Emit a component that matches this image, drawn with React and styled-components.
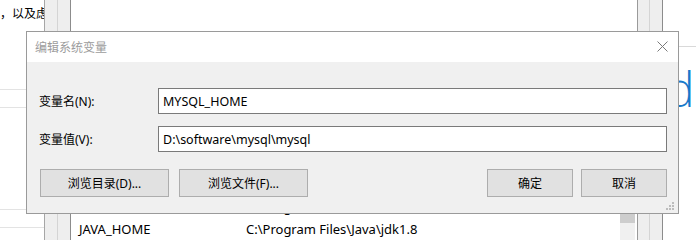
import React from 'react'
import styled, { createGlobalStyle } from 'styled-components'

// CSS
const GlobalStyle = createGlobalStyle`
    html, body {
        margin: 0;
        padding: 0;
        background: #ffffff;
    }
    body {
        font-family: "Noto Sans", "Noto Sans CJK SC", sans-serif;
        font-size: 12px;
        color: #000000;
    }
`

const Screen = styled.div`
    position: relative;
    width: 696px;
    height: 240px;
    overflow: hidden;
    display: flex;
    background: #ffffff;
`

const LeftColumn = styled.div`
    width: 44px;
    flex: none;
    display: flex;
    flex-direction: column;
    overflow: hidden;
`

const TopText = styled.div`
    height: 28px;
    line-height: 28px;
    white-space: nowrap;
`

const Rule = styled.div`
    height: 1px;
    background: #e3e3e3;
    margin-top: ${props => props.$gap}px;
    flex: none;
`

const FrameStrip = styled.div`
    flex: none;
    display: flex;
`

const FrameBand = styled.div`
    width: ${props => props.$width}px;
    background: #eeeeee;
    border-left: 1px solid ${props => props.$left};
    border-right: ${props => (props.$right ? `1px solid ${props.$right}` : 'none')};
`

const ListArea = styled.div`
    width: 549px;
    flex: none;
    display: flex;
    flex-direction: column;
    justify-content: flex-end;
`

const ListRow = styled.div`
    height: 22px;
    display: grid;
    grid-template-columns: 167px 1fr;
    align-items: center;
    font-size: 13px;
    white-space: nowrap;
    padding-left: 8px;
`

const Scrollbar = styled.div`
    width: 15px;
    flex: none;
    margin-right: 2px;
    display: flex;
    flex-direction: column;
`

const ScrollTrack = styled.div`
    background: #f0f0f0;
    flex: 1;
`

const ScrollThumb = styled.div`
    height: 33px;
    background: #cdcdcd;
`

const ScrollSpace = styled.div`
    height: 190px;
`

const RightArea = styled.div`
    flex: 1;
    overflow: hidden;
    display: flex;
    flex-direction: column;
`

const RightRule = styled.div`
    height: 1px;
    background: #d9d9d9;
    margin-top: 46px;
`

const BigHeading = styled.div`
    margin-top: 18px;
    padding-left: 3px;
    font-family: "Open Sans", sans-serif;
    font-weight: 300;
    font-size: 48px;
    line-height: 48px;
    color: #1979ca;
    white-space: nowrap;
`

const Dialog = styled.div`
    position: absolute;
    left: 26px;
    top: 31px;
    width: 653px;
    height: 183px;
    box-sizing: border-box;
    border: 1px solid #9a9a9a;
    background: #f0f0f0;
    display: flex;
    flex-direction: column;
`

const TitleBar = styled.div`
    height: 30px;
    background: #ffffff;
    display: flex;
    align-items: center;
    justify-content: space-between;
    padding: 0 10px 0 8px;
`

const TitleText = styled.span`
    color: #9c9c9c;
    font-size: 12px;
`

const CloseIcon = styled.svg`
    width: 11px;
    height: 11px;
    margin-top: -2px;
`

const DialogBody = styled.div`
    flex: 1;
    padding: 26px 11px 0 12px;
    display: flex;
    flex-direction: column;
`

const FieldGrid = styled.div`
    display: grid;
    grid-template-columns: 119px 1fr;
    row-gap: 12px;
    align-items: center;
`

const FieldLabel = styled.label`
    font-size: 12px;
`

const FieldInput = styled.div`
    height: 26px;
    box-sizing: border-box;
    border: 1px solid #7a7a7a;
    background: #ffffff;
    display: flex;
    align-items: center;
    padding-left: 4px;
    font-size: 12.5px;
    white-space: nowrap;
`

const ButtonRow = styled.div`
    margin-top: 17px;
    display: flex;
    justify-content: space-between;
    padding-left: 1px;
`

const ButtonGroup = styled.div`
    display: flex;
    gap: ${props => props.$gap}px;
`

const DialogButton = styled.button`
    width: ${props => props.$width}px;
    height: 28px;
    box-sizing: border-box;
    background: #e1e1e1;
    border: 1px solid #adadad;
    border-radius: 0;
    padding: 0;
    font-family: inherit;
    font-size: 12px;
    color: #000000;
`

const Grip = styled.svg`
    position: absolute;
    right: 3px;
    bottom: 2px;
    width: 9px;
    height: 9px;
`

function App() {
    return (
        <>
            <GlobalStyle />
            <Screen>
                <LeftColumn>
                    <TopText>，以及虑拟</TopText>
                    <Rule $gap={61} />
                    <Rule $gap={17} />
                    <Rule $gap={101} />
                    <Rule $gap={17} />
                </LeftColumn>
                <FrameStrip>
                    <FrameBand $width={12} $left="#a6a6a6" />
                    <FrameBand $width={12} $left="#d4d4d4" $right="#8c8c8c" />
                </FrameStrip>
                <ListArea>
                    <ListRow>
                        <span>ERLANG_HOME</span>
                        <span>C:\Program Files\erl-24.0</span>
                    </ListRow>
                    <ListRow>
                        <span>JAVA_HOME</span>
                        <span>C:\Program Files\Java\jdk1.8</span>
                    </ListRow>
                </ListArea>
                <Scrollbar>
                    <ScrollSpace />
                    <ScrollThumb />
                    <ScrollTrack />
                </Scrollbar>
                <FrameStrip>
                    <FrameBand $width={11} $left="#9a9a9a" />
                    <FrameBand $width={12} $left="#d4d4d4" $right="#8c8c8c" />
                </FrameStrip>
                <RightArea>
                    <RightRule />
                    <BigHeading>de</BigHeading>
                </RightArea>

                <Dialog>
                    <TitleBar>
                        <TitleText>编辑系统变量</TitleText>
                        <CloseIcon viewBox="0 0 11 11">
                            <path d="M0.5 0.5 L10.5 10.5 M10.5 0.5 L0.5 10.5" stroke="#7a7a7a" strokeWidth="1" fill="none" />
                        </CloseIcon>
                    </TitleBar>
                    <DialogBody>
                        <FieldGrid>
                            <FieldLabel>变量名(N):</FieldLabel>
                            <FieldInput>MYSQL_HOME</FieldInput>
                            <FieldLabel>变量值(V):</FieldLabel>
                            <FieldInput>D:\software\mysql\mysql</FieldInput>
                        </FieldGrid>
                        <ButtonRow>
                            <ButtonGroup $gap={10}>
                                <DialogButton $width={129}>浏览目录(D)...</DialogButton>
                                <DialogButton $width={129}>浏览文件(F)...</DialogButton>
                            </ButtonGroup>
                            <ButtonGroup $gap={8}>
                                <DialogButton $width={86}>确定</DialogButton>
                                <DialogButton $width={86}>取消</DialogButton>
                            </ButtonGroup>
                        </ButtonRow>
                    </DialogBody>
                    <Grip viewBox="0 0 9 9">
                        <rect x="6" y="0" width="2" height="2" fill="#bcbcbc" />
                        <rect x="3" y="3" width="2" height="2" fill="#bcbcbc" />
                        <rect x="6" y="3" width="2" height="2" fill="#bcbcbc" />
                        <rect x="0" y="6" width="2" height="2" fill="#bcbcbc" />
                        <rect x="3" y="6" width="2" height="2" fill="#bcbcbc" />
                        <rect x="6" y="6" width="2" height="2" fill="#bcbcbc" />
                    </Grip>
                </Dialog>
            </Screen>
        </>
    )
}

export default App
